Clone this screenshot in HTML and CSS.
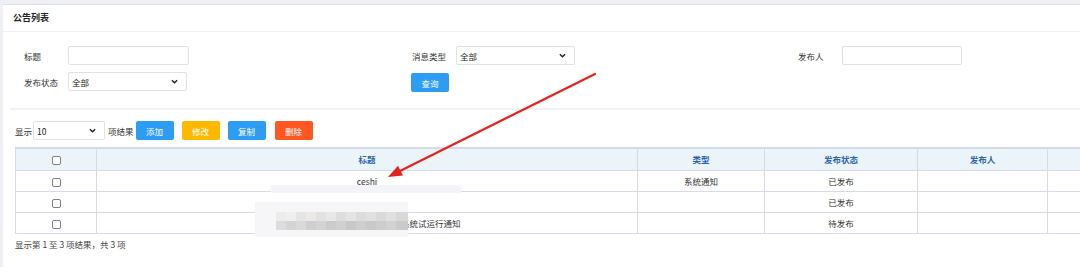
FILE: index.html
```html
<!DOCTYPE html>
<html lang="zh-CN">
<head>
<meta charset="utf-8">
<title>公告列表</title>
<link rel="stylesheet" href="styles.css">
</head>
<body>
<div class="page">
  <div class="card">
    <div class="card-head">公告列表</div>
    <form class="filters">
      <div class="field"><label>标题</label><input class="ctl" type="text"></div>
      <div class="field"><label>消息类型</label>
        <div class="sel"><span>全部</span><svg class="chev" viewBox="0 0 8 5" width="7" height="5"><path d="M1 1 L4 4 L7 1" fill="none" stroke="#222" stroke-width="1.6"/></svg></div>
      </div>
      <div class="field"><label>发布人</label><input class="ctl wide" type="text"></div>
      <div class="field"><label>发布状态</label>
        <div class="sel"><span>全部</span><svg class="chev" viewBox="0 0 8 5" width="7" height="5"><path d="M1 1 L4 4 L7 1" fill="none" stroke="#222" stroke-width="1.6"/></svg></div>
      </div>
      <div class="field"><button type="button" class="btn blue">查询</button></div>
    </form>
    <div class="list">
      <div class="toolbar">
        <span>显示</span>
        <div class="sel small"><span>10</span><svg class="chev" viewBox="0 0 8 5" width="7" height="5"><path d="M1 1 L4 4 L7 1" fill="none" stroke="#222" stroke-width="1.6"/></svg></div>
        <span>项结果</span>
        <button type="button" class="btn blue">添加</button>
        <button type="button" class="btn orange">修改</button>
        <button type="button" class="btn blue">复制</button>
        <button type="button" class="btn red">删除</button>
      </div>
      <table class="grid">
        <colgroup>
          <col class="c-chk"><col class="c-title"><col class="c-type"><col class="c-status"><col class="c-pub"><col>
        </colgroup>
        <thead>
          <tr><th><input type="checkbox" class="chk"></th><th>标题</th><th>类型</th><th>发布状态</th><th>发布人</th><th></th></tr>
        </thead>
        <tbody>
          <tr><td><input type="checkbox" class="chk"></td><td>ceshi</td><td>系统通知</td><td>已发布</td><td></td><td></td></tr>
          <tr><td><input type="checkbox" class="chk"></td><td></td><td></td><td>已发布</td><td></td><td></td></tr>
          <tr><td><input type="checkbox" class="chk"></td><td>关于某某某某某某某某某某某某某系统试运行通知</td><td></td><td>待发布</td><td></td><td></td></tr>
        </tbody>
      </table>
      <div class="info">显示第 1 至 3 项结果，共 3 项</div>
    </div>
  </div>

  <div class="redact band1"></div>
  <div class="redact band2"></div>
  <div class="redact pixels"></div>

  <svg class="arrow" width="1080" height="267" viewBox="0 0 1080 267">
    <line x1="595" y1="74" x2="400" y2="171" stroke="#e5231d" stroke-width="2.2" stroke-linecap="round"/>
    <polygon points="388,177 403,175.5 398,165.8" fill="#e5231d"/>
  </svg>
</div>
</body>
</html>
```

FILE: styles.css
```css
* { box-sizing: border-box; }

html, body {
  margin: 0;
  width: 1080px;
  height: 267px;
  overflow: hidden;
}

body {
  background: #eef0f4;
  font-family: "Noto Sans CJK SC", "Noto Sans", sans-serif;
  font-size: 8.5px;
  color: #333;
}

.page {
  position: relative;
  height: 267px;
  padding: 4px 0 0 3px;
}

.card {
  width: 1110px;
  height: 263px;
  background: #fff;
  border-top: 1px solid #dcdfe6;
}

.card-head {
  height: 27px;
  line-height: 25px;
  padding-left: 10px;
  font-size: 9px;
  font-weight: bold;
  color: #222;
  border-bottom: 1px solid #f0f0f0;
}

.filters {
  display: grid;
  grid-template-columns: 388px 386px 1fr;
  row-gap: 7px;
  margin: 0 0 0 7px;
  padding: 14px 0 17px 14px;
  border-bottom: 2px solid #f1f2f5;
}

.field {
  display: flex;
  align-items: center;
  height: 19px;
}

.field label {
  width: 44px;
  flex: none;
  color: #333;
}

.ctl {
  width: 121px;
  height: 19px;
  border: 1px solid #e2e2e2;
  border-radius: 2px;
  background: #fff;
  margin: 0;
  padding: 0 4px;
  font: inherit;
}

.ctl.wide { width: 120px; }

.sel {
  position: relative;
  display: flex;
  align-items: center;
  justify-content: space-between;
  width: 119px;
  height: 19px;
  border: 1px solid #e2e2e2;
  border-radius: 2px;
  padding: 0 8px 0 3px;
  color: #222;
  background: #fff;
}

.sel.small {
  width: 72px;
  height: 19px;
  margin: 0 3px 0 1px;
}

.chev { display: block; }

.btn {
  width: 38px;
  height: 19px;
  border: 0;
  border-radius: 2px;
  color: #fff;
  font: inherit;
  padding: 0;
  cursor: pointer;
}

.btn.blue { background: #2d9cf3; }
.btn.orange { background: #ffb800; }
.btn.red { background: #ff5722; }

.filters .btn { margin-left: -1px; margin-top: 2px; }

.list {
  padding: 11px 0 0 12px;
}

.toolbar {
  display: flex;
  align-items: center;
  height: 19px;
}

.toolbar .btn { margin-left: 8px; }
.toolbar .btn:first-of-type { margin-left: 2px; }
.toolbar .btn.red { margin-left: 9px; }

.grid {
  margin-top: 7px;
  width: 1095px;
  border-collapse: collapse;
  table-layout: fixed;
}

.c-chk { width: 81px; }
.c-title { width: 541px; }
.c-type { width: 127px; }
.c-status { width: 153px; }
.c-pub { width: 130px; }

.grid th, .grid td {
  border: 1px solid #d8daeb;
  text-align: center;
  padding: 0;
  white-space: nowrap;
  overflow: hidden;
}

.grid thead tr { height: 22px; }
.grid tbody tr { height: 21px; }

.grid th {
  background: #ebf4f9;
  color: #2f63ab;
  font-weight: bold;
  border-top: 2px solid #d3dbe8;
}

.grid td { color: #333; }

.chk {
  -webkit-appearance: none;
  appearance: none;
  width: 9px;
  height: 9px;
  margin: 0;
  border: 1px solid #808080;
  border-radius: 2px;
  background: #fff;
  vertical-align: middle;
}

.info {
  margin-top: 4px;
  line-height: 12px;
  color: #444;
}

.redact {
  position: absolute;
}

.band1 {
  left: 271px;
  top: 185px;
  width: 190px;
  height: 8px;
  background: #f3f4f8;
}

.band2 {
  left: 255px;
  top: 202px;
  width: 153px;
  height: 35px;
  background: #f6f6f9;
}

.pixels {
  left: 276px;
  top: 212px;
  width: 132px;
  height: 18px;
  background:
    linear-gradient(90deg,
      #ececec 0 10px, #f0efee 10px 20px, #e5e5e5 20px 30px, #ebe8e6 30px 40px,
      #e2e2e2 40px 50px, #e8e8e8 50px 60px, #dedede 60px 70px, #e4e4e4 70px 80px,
      #dcdcdc 80px 90px, #e2e0df 90px 100px, #dadada 100px 110px, #e0e0e0 110px 120px,
      #d8d8d8 120px 132px) top / 100% 9px no-repeat,
    linear-gradient(90deg,
      #dcdcdc 0 10px, #d4d4d4 10px 20px, #d9d9d9 20px 30px, #cfcfcf 30px 40px,
      #d3d3d3 40px 50px, #cbcbcb 50px 60px, #d0d0d0 60px 70px, #c8c8c8 70px 80px,
      #cecece 80px 90px, #c9c9c9 90px 100px, #cdcdcd 100px 110px, #d2d2d2 110px 120px,
      #cacaca 120px 132px) bottom / 100% 9px no-repeat;
}

.arrow {
  position: absolute;
  left: 0;
  top: 0;
  pointer-events: none;
}
```
